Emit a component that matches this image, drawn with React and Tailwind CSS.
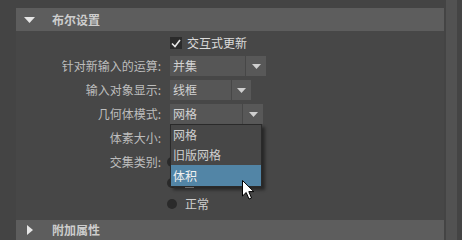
import React from 'react';

const Dropdown = ({ value, mainW, arrowW = 20 }) => (
  <div className="flex h-[20px] gap-[1px]">
    <div className="bg-[#565656] flex items-center pl-[3px] text-[#d2d2d2]" style={{ width: mainW }}>
      {value}
    </div>
    <div className="bg-[#585858] flex items-center justify-center" style={{ width: arrowW }}>
      <svg width="9" height="5" viewBox="0 0 9 5"><path d="M0 0 L9 0 L4.5 5 Z" fill="#cfcfcf" /></svg>
    </div>
  </div>
);

const Row = ({ label, children, className = '' }) => (
  <div className={`flex items-center h-[20px] ${className}`}>
    <div className="w-[146px] text-right text-[#bdbdbd] pr-[1px]">{label}</div>
    <div className="ml-[8px] flex items-center">{children}</div>
  </div>
);

// radio rows; the first two sit under the open popup, only the circle edge peeks out
const Radio = ({ label, text, mark, className = '' }) => (
  <div className={`flex items-center h-[21px] ${className}`}>
    <div className="w-[146px] text-right text-[#bdbdbd] pr-[1px]">{label}</div>
    <div className="ml-[5px] w-[10px] h-[10px] rounded-full bg-[#2a2a2a]" />
    {text && <div className="ml-[8px] text-[#cfcfcf]">{text}</div>}
    {mark && <div className="ml-[8px] mt-[10px] w-[9px] h-[1px] bg-[#bdbdbd]" />}
  </div>
);

export default function App() {
  return (
    <div className="relative w-[462px] h-[240px] bg-[#444444] flex overflow-hidden text-[12px] leading-none font-['Noto_Sans_CJK_SC',sans-serif]">
      <div className="w-[444px] pl-[16px] pt-[8px] flex flex-col">
        <div className="h-[23px] bg-[#5d5d5d] flex items-center">
          <div className="pl-[8px] w-[36px]">
            <svg width="11" height="6" viewBox="0 0 11 6"><path d="M0 0 L11 0 L5.5 6 Z" fill="#e6e6e6" /></svg>
          </div>
          <span className="font-bold text-[#cdcdcd]">布尔设置</span>
        </div>
        <div className="flex-1 bg-[#474747] flex flex-col">
          <div className="flex items-center h-[20px] mt-[2px] pl-[154px]">
            <div className="w-[12px] h-[12px] bg-[#2b2b2b] flex items-center justify-center">
              <svg width="10" height="9" viewBox="0 0 10 9"><path d="M1 4.5 L4 7.5 L9 1" stroke="#e8e8e8" strokeWidth="1.6" fill="none" /></svg>
            </div>
            <span className="ml-[5px] text-[#dcdcdc]">交互式更新</span>
          </div>
          <Row label="针对新输入的运算:" className="mt-[3px]"><Dropdown value="并集" mainW={75} /></Row>
          <Row label="输入对象显示:" className="mt-[4px]"><Dropdown value="线框" mainW={61} arrowW={19} /></Row>
          <Row label="几何体模式:" className="mt-[4px]"><Dropdown value="网格" mainW={72} /></Row>
          <Row label="体素大小:" className="mt-[4px]"><div /></Row>
          <Radio label="交集类别:" className="mt-[3px]" />
          <Radio label="" mark />
          <Radio label="" text="正常" />
          <div className="mt-auto h-[20px] bg-[#5d5d5d] flex items-center">
            <div className="pl-[11px] w-[36px]">
              <svg width="6" height="10" viewBox="0 0 6 10"><path d="M0 0 L6 5 L0 10 Z" fill="#e6e6e6" /></svg>
            </div>
            <span className="font-bold text-[#cdcdcd]">附加属性</span>
          </div>
        </div>
      </div>
      <div className="w-[2px]" />
      <div className="w-[11px] bg-[#525252]" />

      <div className="absolute left-[170px] top-[124px] w-[92px] bg-[#474747] border border-[#2a2a2a] shadow-[3px_3px_3px_rgba(0,0,0,0.45)] text-[#cfcfcf]">
        <div className="h-[20px] flex items-center pl-[2px]">网格</div>
        <div className="h-[20px] flex items-center pl-[2px]">旧版网格</div>
        <div className="h-[21px] flex items-center pl-[2px] bg-[#5285a6] text-[#f0f0f0]">体积</div>
      </div>

      <svg className="absolute left-[242px] top-[180px]" width="14" height="21" viewBox="0 0 14 21">
        <path d="M0.5 0.5 L0.5 16 L4.2 12.5 L7 19 L9.5 18 L6.8 11.6 L11.8 11.6 Z" fill="#ffffff" stroke="#000000" strokeWidth="1" />
      </svg>
    </div>
  );
}
